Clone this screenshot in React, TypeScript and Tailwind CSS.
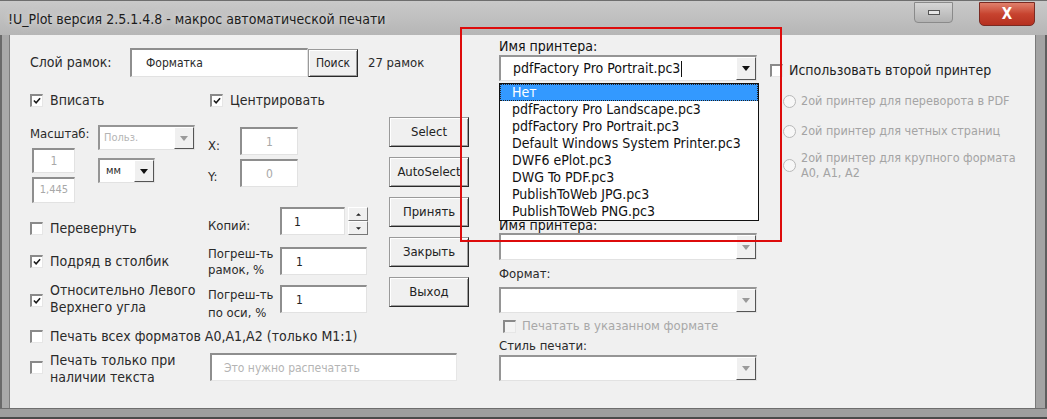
import React from "react";

const FONT = "font-['DejaVu_Sans_Condensed','Liberation_Sans',sans-serif]";

function Check({ checked = false, disabled = false }: { checked?: boolean; disabled?: boolean }) {
  return (
    <span
      className={`relative inline-block w-[13px] h-[13px] shrink-0 border-t-2 border-l-2 border-b border-r border-t-[#8a8a8a] border-l-[#8a8a8a] border-b-[#e6e6e6] border-r-[#e6e6e6] ${
        disabled ? "bg-[#f4f4f4]" : "bg-white"
      }`}
    >
      {checked && (
        <svg viewBox="0 0 9 9" className="absolute left-[1px] top-[1px] w-[8px] h-[8px]">
          <path d="M1 4 L3.5 6.5 L8 1.5" stroke="#1a1a1a" strokeWidth="1.8" fill="none" />
        </svg>
      )}
    </span>
  );
}

function Radio() {
  return (
    <span className="inline-block w-[13px] h-[13px] shrink-0 rounded-full border border-[#b8b8b8] bg-[#f7f7f7]" />
  );
}

function Field({
  w,
  h,
  text,
  dim = false,
  className = "",
}: {
  w: string;
  h: string;
  text?: string;
  dim?: boolean;
  className?: string;
}) {
  return (
    <div
      className={`${w} ${h} ${className} shrink-0 flex items-center bg-white border-t-2 border-l-2 border-b border-r border-t-[#8e8e8e] border-l-[#8e8e8e] border-b-[#e2e2e2] border-r-[#e2e2e2] text-[12px] ${
        dim ? "text-[#a8a8a8] justify-center" : "text-[#222] pl-[10px]"
      }`}
    >
      {text}
    </div>
  );
}

function Arrow({ dim = false }: { dim?: boolean }) {
  return (
    <div className="w-[20px] h-full shrink-0 flex items-center justify-center bg-[#f0f0f0] border border-t-white border-l-white border-r-[#555] border-b-[#555]">
      <svg viewBox="0 0 8 5" className="w-[8px] h-[5px]">
        <path d="M0 0 H8 L4 5 Z" fill={dim ? "#9a9a9a" : "#111"} />
      </svg>
    </div>
  );
}

function Combo({
  w,
  h,
  text,
  dim = false,
  caret = false,
  textClass = "",
}: {
  w: string;
  h: string;
  text?: string;
  dim?: boolean;
  caret?: boolean;
  textClass?: string;
}) {
  return (
    <div
      className={`${w} ${h} shrink-0 flex bg-white border-t-2 border-l-2 border-b border-r border-t-[#959595] border-l-[#959595] border-b-[#e2e2e2] border-r-[#e2e2e2]`}
    >
      <div className={`flex-1 flex items-center whitespace-nowrap overflow-hidden ${textClass}`}>
        {text}
        {caret && <span className="ml-[1px] w-px h-[16px] bg-[#111]" />}
      </div>
      <Arrow dim={dim} />
    </div>
  );
}

function Btn({ label, w = "w-[80px]", h = "h-[30px]", small = false }: { label: string; w?: string; h?: string; small?: boolean }) {
  return (
    <div
      className={`${w} ${h} shrink-0 flex items-center justify-center bg-[#f0f0f0] border border-t-[#9a9a9a] border-l-[#9a9a9a] border-r-[#2a2a2a] border-b-[#2a2a2a] shadow-[inset_1px_1px_0_#ffffff,inset_-1px_-1px_0_#9e9e9e] text-[#222] ${
        small ? "text-[12px]" : "text-[13px]"
      }`}
    >
      {label}
    </div>
  );
}

const printers = [
  "Нет",
  "pdfFactory Pro Landscape.pc3",
  "pdfFactory Pro Portrait.pc3",
  "Default Windows System Printer.pc3",
  "DWF6 ePlot.pc3",
  "DWG To PDF.pc3",
  "PublishToWeb JPG.pc3",
  "PublishToWeb PNG.pc3",
];

export default function App() {
  return (
    <div className={`relative w-[1047px] h-[419px] bg-[#a6a6a6] overflow-hidden flex flex-col ${FONT}`}>
      {/* title bar */}
      <div className="h-[35px] shrink-0 flex items-start bg-gradient-to-b from-[#c9c9c9] to-[#b6b6b6] border-t border-[#6e6e6e]">
        <div className="mt-[8px] ml-[8px] text-[14px] text-[#1c1c1c] [text-shadow:0_0_6px_#e8e8e8]">
          !U_Plot версия 2.5.1.4.8 - макрос автоматической печати
        </div>
        <div className="ml-auto flex items-start mr-[12px]">
          <div className="mt-[1px] w-[39px] h-[21px] rounded-b-[4px] border border-[#8a8a8a] bg-gradient-to-b from-[#d6d6d6] to-[#b2b2b2] flex items-center justify-center">
            <span className="w-[12px] h-[5px] border border-[#555] bg-[#e6e6e6]" />
          </div>
          <div className="ml-[26px] mt-[1px] w-[56px] h-[24px] rounded-b-[5px] border border-[#7a2a22] bg-gradient-to-b from-[#e0806c] via-[#c7432f] to-[#b53020] flex items-center justify-center text-white text-[15px] font-bold">
            X
          </div>
        </div>
      </div>

      <div className="flex-1 flex min-h-0">
        <div className="w-[10px] shrink-0 border-l-2 border-[#6a6a6a] border-r border-r-[#7e7e7e] bg-[#a9a9a9]" />

        {/* client area */}
        <div className="flex-1 flex bg-[#f0f0f0] text-[14px] text-[#2a2a2a] pl-[20px] overflow-visible">
          {/* left panel */}
          <div className="w-[359px] shrink-0 mt-[13px] flex flex-col">
            <div className="h-[29px] flex items-center whitespace-nowrap">
              <div className="w-[100px] shrink-0">Слой рамок:</div>
              <div className="w-[178px] shrink-0 h-[29px] flex items-start pt-[4px] pl-[14px] bg-white border-t-2 border-l-2 border-b border-r border-t-[#8e8e8e] border-l-[#8e8e8e] border-b-[#e2e2e2] border-r-[#e2e2e2] text-[12px]">
                Форматка
              </div>
              <Btn label="Поиск" w="w-[50px]" h="h-[28px]" small />
              <div className="ml-[10px] shrink-0 text-[13px]">27 рамок</div>
            </div>

            <div className="mt-[15px] h-[16px] flex items-center">
              <div className="w-[180px] shrink-0 flex items-center gap-[7px]">
                <Check checked />
                <span>Вписать</span>
              </div>
              <div className="flex items-center gap-[7px]">
                <Check checked />
                <span>Центрировать</span>
              </div>
            </div>

            <div className="mt-[17px] h-[80px] flex">
              <div className="w-[68px] shrink-0 flex flex-col">
                <div className="mt-[1px] h-[16px] leading-[16px] text-[13px]">Масштаб:</div>
                <Field w="w-[43px]" h="h-[25px]" text="1" dim className="ml-[2px] mt-[6px]" />
                <Field w="w-[43px]" h="h-[26px]" text="1,445" dim className="ml-[2px] mt-[4px] !text-[11px]" />
              </div>
              <div className="w-[110px] shrink-0 flex flex-col">
                <Combo w="w-[97px]" h="h-[25px]" text="Польз." dim textClass="pl-[4px] text-[11px] text-[#b4b4b4]" />
                <div className="mt-[8px]">
                  <Combo w="w-[57px]" h="h-[25px]" text="мм" textClass="pl-[6px] text-[11px]" />
                </div>
              </div>
              <div className="flex flex-col">
                <div className="mt-[2px] h-[28px] flex items-center">
                  <span className="w-[32px] shrink-0 pt-[10px] text-[13px]">X:</span>
                  <Field w="w-[58px]" h="h-[28px]" text="1" dim />
                </div>
                <div className="mt-[4px] h-[28px] flex items-center">
                  <span className="w-[32px] shrink-0 pt-[8px] text-[13px]">Y:</span>
                  <Field w="w-[58px]" h="h-[28px]" text="0" dim />
                </div>
              </div>
            </div>

            <div className="mt-[2px] h-[28px] flex">
              <div className="w-[178px] shrink-0 flex items-center gap-[7px] pt-[15px]">
                <Check />
                <span>Перевернуть</span>
              </div>
              <div className="w-[72px] shrink-0 pt-[9px] text-[13px]">Копий:</div>
              <Field w="w-[65px]" h="h-[28px]" text="1" className="!pl-[12px]" />
              <div className="ml-[3px] w-[20px] h-[28px] shrink-0 flex flex-col">
                <div className="flex-1 flex items-center justify-center border border-t-white border-l-white border-r-[#777] border-b-[#777]">
                  <svg viewBox="0 0 6 3" className="w-[5px] h-[3px]"><path d="M0 3 L3 0 L6 3 Z" fill="#222" /></svg>
                </div>
                <div className="flex-1 flex items-center justify-center border border-t-white border-l-white border-r-[#777] border-b-[#777]">
                  <svg viewBox="0 0 6 3" className="w-[5px] h-[3px]"><path d="M0 0 H6 L3 3 Z" fill="#222" /></svg>
                </div>
              </div>
            </div>

            <div className="mt-[12px] h-[28px] flex">
              <div className="w-[178px] shrink-0 flex items-center gap-[7px]">
                <Check checked />
                <span>Подряд в столбик</span>
              </div>
              <div className="w-[72px] shrink-0 text-[13px] leading-[16px] -mt-[1px]">
                Погреш-ть
                <br />
                рамок, %
              </div>
              <Field w="w-[87px]" h="h-[28px]" text="1" className="!pl-[14px]" />
            </div>

            <div className="mt-[10px] h-[30px] flex">
              <div className="w-[178px] shrink-0 flex items-center gap-[7px]">
                <Check checked />
                <span className="leading-[17px] -mt-[2px]">
                  Относительно Левого
                  <br />
                  Верхнего угла
                </span>
              </div>
              <div className="w-[72px] shrink-0 text-[13px] leading-[18px] pt-[1px]">
                Погреш-ть
                <br />
                по оси, %
              </div>
              <Field w="w-[87px]" h="h-[28px]" text="1" className="!pl-[14px]" />
            </div>

            <div className="mt-[13px] h-[16px] flex items-center gap-[7px] whitespace-nowrap">
              <Check />
              <span>Печать всех форматов A0,A1,A2 (только М1:1)</span>
            </div>

            <div className="mt-[9px] h-[28px] flex">
              <div className="w-[180px] shrink-0 flex items-center gap-[7px] whitespace-nowrap">
                <Check />
                <span className="leading-[17px] pt-[4px]">
                  Печать только при
                  <br />
                  наличии текста
                </span>
              </div>
              <div className="w-[247px] shrink-0 h-[28px] flex items-center pl-[12px] bg-white border-t-2 border-l-2 border-b border-r border-t-[#8e8e8e] border-l-[#8e8e8e] border-b-[#e6e6e6] border-r-[#e6e6e6] text-[12px] text-[#b4b4b4]">
                Это нужно распечатать
              </div>
            </div>
          </div>

          {/* buttons column */}
          <div className="w-[80px] shrink-0 mt-[82px] flex flex-col gap-[10px]">
            <Btn label="Select" />
            <Btn label="AutoSelect" />
            <Btn label="Принять" />
            <Btn label="Закрыть" />
            <Btn label="Выход" />
          </div>

          {/* printer column */}
          <div className="w-[260px] shrink-0 ml-[30px] mt-[3px] flex flex-col">
            <div className="h-[17px] leading-[17px] text-[#111]">Имя принтера:</div>
            <Combo w="w-[258px]" h="h-[26px]" text="pdfFactory Pro Portrait.pc3" caret textClass="pl-[12px] text-[#111]" />
            <div className="mt-[136px] h-[16px] leading-[16px] text-[#111]">Имя принтера:</div>
            <Combo w="w-[258px]" h="h-[27px]" dim />
            <div className="mt-[6px] h-[16px] leading-[16px] text-[13px]">Формат:</div>
            <div className="mt-[5px]">
              <Combo w="w-[258px]" h="h-[26px]" dim />
            </div>
            <div className="mt-[5px] h-[16px] flex items-center gap-[6px] text-[#a8a8a8] text-[13px]">
              <span className="ml-[4px] flex"><Check disabled /></span>
              <span>Печатать в указанном формате</span>
            </div>
            <div className="mt-[4px] h-[16px] leading-[16px] text-[13px]">Стиль печати:</div>
            <div className="mt-[1px]">
              <Combo w="w-[258px]" h="h-[26px]" dim />
            </div>
          </div>

          {/* second printer column */}
          <div className="ml-[11px] mt-[27px] flex flex-col">
            <div className="h-[16px] flex items-center gap-[6px] text-[14px] text-[#1e1e1e] whitespace-nowrap">
              <Check />
              <span>Использовать второй принтер</span>
            </div>
            <div className="ml-[13px] mt-[15px] h-[16px] flex items-center gap-[5px] text-[12.5px] text-[#a4a4a4] whitespace-nowrap">
              <Radio />
              <span>2ой принтер для переворота в PDF</span>
            </div>
            <div className="ml-[13px] mt-[14px] h-[16px] flex items-center gap-[5px] text-[12.5px] text-[#a4a4a4] whitespace-nowrap">
              <Radio />
              <span>2ой принтер для четных страниц</span>
            </div>
            <div className="ml-[13px] mt-[11px] flex items-center gap-[5px] text-[12.5px] text-[#a4a4a4] whitespace-nowrap">
              <Radio />
              <span className="leading-[15px]">
                2ой принтер для крупного формата
                <br />
                A0, A1, A2
              </span>
            </div>
          </div>
        </div>

        <div className="w-[12px] shrink-0 border-l border-[#7a7a7a] border-r-2 border-r-[#5e5e5e] bg-[#a3a3a3]" />
      </div>

      <div className="h-[11px] shrink-0 border-t border-[#6e6e6e] border-b-2 border-b-[#4a4a4a] bg-[#9e9e9e]" />

      {/* opened dropdown list */}
      <div className="absolute left-[499px] top-[83px] w-[260px] bg-white border border-[#111] text-[14px] text-[#111]">
        {printers.map((p, i) => (
          <div
            key={p}
            className={`h-[17px] leading-[17px] pl-[12px] whitespace-nowrap ${
              i === 0 ? "bg-[#3399ff] text-white outline-1 outline-dotted outline-[#222] -outline-offset-1" : ""
            }`}
          >
            {p}
          </div>
        ))}
      </div>

      {/* red highlight frame */}
      <div className="absolute left-[460px] top-[27px] w-[322px] h-[215px] border-[2px] border-[#dd0b0b] pointer-events-none" />
    </div>
  );
}
